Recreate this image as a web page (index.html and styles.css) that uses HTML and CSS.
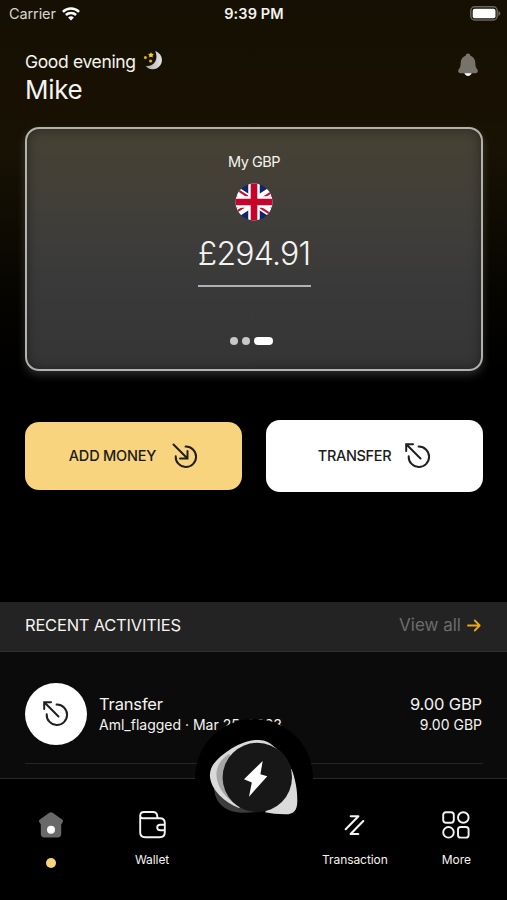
FILE: index.html
```html
<!DOCTYPE html>
<html lang="en">
<head>
<meta charset="utf-8">
<title>Wallet home</title>
<link rel="stylesheet" href="styles.css">
</head>
<body>
<svg class="defs" width="0" height="0" aria-hidden="true">
  <symbol id="transfer" viewBox="0 0 26 26">
    <path d="M13.6 3.6A10.2 10.2 0 1 1 3.7 13.2M15.5 15.5L1.8 1.8M1.2 8V1.2H8"/>
  </symbol>
</svg>
<main class="screen">
  <header class="status">
    <div class="carrier"><span>Carrier</span>
      <svg width="18" height="14" viewBox="0 0 18 14" fill="none" stroke="#fff" stroke-width="2.5"><path d="M.9 4.8a11.7 11.7 0 0 1 16.2 0M3.9 8a7.2 7.2 0 0 1 10.2 0"/><path d="M9 13.5L6.1 10.6a4.1 4.1 0 0 1 5.8 0z" fill="#fff" stroke="none"/></svg>
    </div>
    <div class="time">9:39 PM</div>
    <svg class="battery" width="31" height="15" viewBox="0 0 31 15"><rect x=".8" y=".8" width="26.4" height="13.2" rx="4" fill="none" stroke="#69655d" stroke-width="1.5"/><rect x="2.7" y="2.7" width="22.8" height="9.5" rx="2" fill="#fff"/><path d="M28.4 5v5q2-.7 2-2.5T28.4 5z" fill="#69655d"/></svg>
  </header>
  <section class="greeting">
    <div>
      <div class="hello"><span>Good evening</span>
        <svg width="20" height="20" viewBox="0 0 20 20"><defs><linearGradient id="moon"><stop offset="0" stop-color="#a9a8ab"/><stop offset="1" stop-color="#e5e4e5"/></linearGradient></defs><path d="M12.2 1C23 5.2 19.8 19.2 9.6 19.2c-3.4 0-5.7-1.5-7-3.4C11.2 17.3 15.8 9 12.2 1z" fill="url(#moon)"/><path d="M8 2.2l.9 1.5 1.9.4-1.2 1.4.1 1.9L8 6.7l-1.8.7.1-1.9-1.2-1.4 2-.4z" fill="#f5cd17"/><circle cx="2.4" cy="7.5" r="1.5" fill="#d9b514"/><circle cx="7.6" cy="11" r="1.6" fill="#d9b514"/></svg>
      </div>
      <div class="name">Mike</div>
    </div>
    <svg class="bell" width="20" height="24" viewBox="0 0 20 24"><path d="M6.3 19.5h7.4C13.2 24 6.8 24 6.3 19.5z" fill="#fff"/><path d="M10 .5c1.4 0 2.3.9 2.3 2.2C16 4 17.2 6.8 17.3 10c.1 3.4.6 4.8 2.1 6.6 1.1 1.5.1 3.6-1.7 3.6H2.3C.5 20.2-.5 18.1.6 16.6 2.1 14.8 2.6 13.4 2.7 10 2.8 6.8 4 4 7.7 2.7 7.7 1.4 8.6.5 10 .5z" fill="#77736b"/></svg>
  </section>
  <section class="card">
    <div class="currency">My GBP</div>
    <svg class="flag" width="38" height="38" viewBox="0 0 38 38"><defs><clipPath id="disc"><circle cx="19" cy="19" r="18.5"/></clipPath></defs><g clip-path="url(#disc)"><path fill="#10256e" d="M0 0h38v38H0z"/><path d="M-5 3.5l48 31M43 3.5l-48 31" stroke="#fff" stroke-width="8"/><path d="M19 20.5L43 5M19 17.500L-5 33M19 17.500L-5 2M19 20.500L43 36" stroke="#c8102e" stroke-width="2.2"/><path d="M19 0v38M0 19h38" stroke="#fff" stroke-width="11.5"/><path d="M19 0v38M0 19h38" stroke="#c5032b" stroke-width="6.6"/></g></svg>
    <div class="balance">£294.91</div>
    <div class="dots"><i></i><i></i><i class="on"></i></div>
  </section>
  <section class="actions">
    <button class="action add"><span>ADD MONEY</span><svg width="26" height="26" viewBox="0 0 26 26"><path d="M13.6 3.6A10.2 10.2 0 1 1 3.7 13.2M1.5 1.5L15.5 15.5M15.5 8v7.5H8"/></svg></button>
    <button class="action send"><span>TRANSFER</span><svg width="26" height="26"><use href="#transfer"/></svg></button>
  </section>
  <section class="recent">
    <div class="recent-head"><h2>RECENT ACTIVITIES</h2><a><span>View all</span><svg width="14" height="13" viewBox="0 0 14 13" fill="none" stroke="#eaa91a" stroke-width="1.8" stroke-linecap="round" stroke-linejoin="round"><path d="M1 6.5h11.5M7.8 1.5l4.9 5-4.9 5"/></svg></a></div>
    <article class="entry">
      <div class="avatar"><svg width="26" height="26"><use href="#transfer"/></svg></div>
      <div class="what"><b>Transfer</b><small>Aml_flagged · Mar 25, 2023</small></div>
      <div class="sum"><b>9.00 GBP</b><small>9.00 GBP</small></div>
    </article>
  </section>
  <nav class="tabs">
    <div class="tab home"><svg width="28" height="28" viewBox="0 0 28 28"><path d="M12.3 1.8q1.7-1.2 3.4 0l9.7 7q1.2 1 .4 2.2l-1.6 2.5v9.2q0 3.8-3.8 3.8H7.6q-3.8 0-3.8-3.8v-9.2L2.2 11q-.8-1.2.4-2.2z" fill="#696969"/><circle cx="14" cy="18.8" r="4" fill="#fff"/></svg><i class="marker"></i></div>
    <div class="tab wallet"><svg width="28" height="28" viewBox="0 0 28 28"><path d="M1.2 9v12.3q0 5 5 5h14.6q5 0 5-5V12q0-4.8-5-4.8H3.7Q1.2 7.2 1.2 4.8 1.2 1 5 1h9.3q3 0 3.8 3l.4 3M1.2 4.8V10M25.8 13.8h-4.6q-3 0-3 2.7t3 2.7h4.6"/></svg><span>Wallet</span></div>
    <div class="tab"></div>
    <div class="tab"><svg width="28" height="28" viewBox="0 0 28 28"><path d="M4.7 18.2L17.4 5.2H9.7M22.3 10L9.6 23h7.7" stroke-width="2.1"/></svg><span>Transaction</span></div>
    <div class="tab"><svg width="28" height="28" viewBox="0 0 28 28"><rect x="1.2" y="1.2" width="10.6" height="10.6" rx="2.7"/><circle cx="21.3" cy="6.5" r="5.3"/><circle cx="6.5" cy="21.3" r="5.3"/><rect x="16" y="16" width="10.6" height="10.6" rx="2.7"/></svg><span>More</span></div>
    <div class="hump"><svg width="118" height="118" viewBox="0 0 118 118">
      <path d="M19 64C18 79 25 89 38 92.5c8 2 17 1 24 .5L50 45z" fill="#3c3c3c"/>
      <path d="M66 22C80 25 93 36 97 53L62 70z" fill="#393939"/>
      <path d="M96.5 50c4 10 6 22 5.8 32 0 10-4 13.5-12.3 13.3-8 0-14-1-20-2z" fill="#dadada"/>
      <path d="M82 30.5C76 25 73 22 66 21.3 57 20 47 23.5 36.5 29.5 22 39 14 47 15 58c1.5 13 14 25 29 31l20-20z" fill="#dadada"/>
      <path d="M34 35C25 41 21 48 21.5 57c1 12 9 22 21.500 30l18-28z" fill="#a6a6a6"/>
      <circle cx="62.3" cy="58.5" r="34.7" fill="#171717"/>
      <path d="M67.7 42L49 60.3l7.8 3.2L54 77.7l18.3-20.500-6.900-2z" fill="#fff"/></svg></div>
  </nav>
</main>
</body>
</html>
```
FILE: styles.css
```css
* { box-sizing: border-box; }
body { margin: 0; background: #000; color: #f5f3ef; font-family: Inter, "Noto Sans", sans-serif; }
svg { display: block; flex: none; }
.defs { position: absolute; }
.screen { width: 507px; height: 900px; overflow: hidden; display: flex; flex-direction: column; background: linear-gradient(#151003 0, #181103 95px, #181204 150px, #050400 300px, #000 375px); }
.status { height: 27px; flex: none; display: grid; grid-template-columns: 1fr auto 1fr; align-items: center; padding: 0 6px 0 9px; font-size: 14.5px; }
.carrier { display: flex; align-items: center; gap: 6px; color: #d8d5ce; letter-spacing: -.1px; }
.time { font-weight: 600; font-size: 14.5px; letter-spacing: .1px; margin-right: 2px; }
.battery { justify-self: end; }
.greeting { height: 100px; flex: none; display: flex; justify-content: space-between; padding: 22px 29px 0 25px; }
.hello { display: flex; gap: 7px; height: 24px; align-items: center; font-size: 17.5px; letter-spacing: -.35px; }
.hello svg { margin-bottom: 2px; }
.name { font-size: 26px; line-height: 34px; height: 34px; letter-spacing: -.3px; }
.bell { margin-top: 4px; }
.card { height: 244px; flex: none; margin: 0 24px 0 25px; border: 2px solid #b3b1ab; border-radius: 14px; background: linear-gradient(#454133 0, #444037 50px, #3e3d3b 110px, #393939 160px, #353535 100%); box-shadow: 0 4px 9px rgba(255,255,255,.17), inset 0 0 12px rgba(0,0,0,.4); display: flex; flex-direction: column; align-items: center; }
.currency { margin-top: 22px; height: 22px; line-height: 22px; font-size: 14.5px; letter-spacing: -.5px; }
.flag { margin-top: 10px; }
.balance { margin-top: 10px; height: 56px; width: 113px; line-height: 45px; font-size: 32px; font-weight: 300; letter-spacing: -.8px; white-space: nowrap; display: flex; justify-content: center; border-bottom: 2px solid #b1b1b1; }
.dots { margin-top: 50px; margin-right: 5px; display: flex; gap: 4px; }
.dots i { width: 8px; height: 8px; border-radius: 4px; background: #c8c8c8; }
.dots .on { width: 19px; background: #fff; }
.actions { height: 231px; flex: none; padding: 49px 24px 0 25px; display: grid; grid-template-columns: 217px 217px; justify-content: space-between; align-items: start; }
.action { height: 72px; border: 0; border-radius: 14px; background: #fff; color: #1b1b1b; font: 500 14.5px Inter, sans-serif; letter-spacing: -.2px; display: flex; align-items: center; justify-content: center; gap: 14px; padding: 0 0 1px 0; }
.action svg, .avatar svg { fill: none; stroke: #202020; stroke-width: 2; stroke-linecap: round; }
.send { letter-spacing: -.35px; }
.add { background: #f8d47e; height: 68px; margin-top: 2px; gap: 16px; }
.recent { flex: 1; background: #0b0b0b; }
.recent-head { height: 50px; background: #232323; border-bottom: 1px solid #303030; display: flex; justify-content: space-between; align-items: center; padding: 0 26px 3px 25px; }
h2 { margin: 0; font-size: 16.5px; font-weight: 400; letter-spacing: -.22px; }
.recent-head a { display: flex; align-items: center; gap: 6px; font-size: 17px; color: #6c6c6c; letter-spacing: 0; }
.entry { height: 112px; margin: 0 24px 0 25px; border-bottom: 1px solid #252525; display: flex; align-items: center; padding-top: 12px; }
.avatar { width: 62px; height: 62px; border-radius: 50%; background: #fff; display: grid; place-items: center; }
.what { margin-left: 12px; flex: 1; }
.what b, .sum b { display: block; font-size: 16.5px; line-height: 21px; font-weight: 400; letter-spacing: -.15px; }
.what small, .sum small { display: block; font-size: 14px; line-height: 19px; }
.sum { text-align: right; margin-right: 1px; }
.tabs { position: relative; height: 122px; flex: none; background: #000; border-top: 1px solid #292929; display: grid; grid-template-columns: repeat(5, 1fr); }
.tab { display: flex; flex-direction: column; align-items: center; padding-top: 32px; font-size: 12px; }
.tab span { margin-top: 13px; line-height: 16px; white-space: nowrap; letter-spacing: -.07px; }
.tab svg { fill: none; stroke: #f3f3f3; stroke-width: 1.9; stroke-linecap: round; stroke-linejoin: round; }
.home svg { stroke: none; }
.wallet svg { margin-left: 2px; }
.marker { width: 10px; height: 10px; border-radius: 50%; background: #f8d47e; margin-top: 19px; }
.hump { position: absolute; left: 195px; top: -60px; width: 118px; height: 118px; border-radius: 50%; background: #000; }
```
